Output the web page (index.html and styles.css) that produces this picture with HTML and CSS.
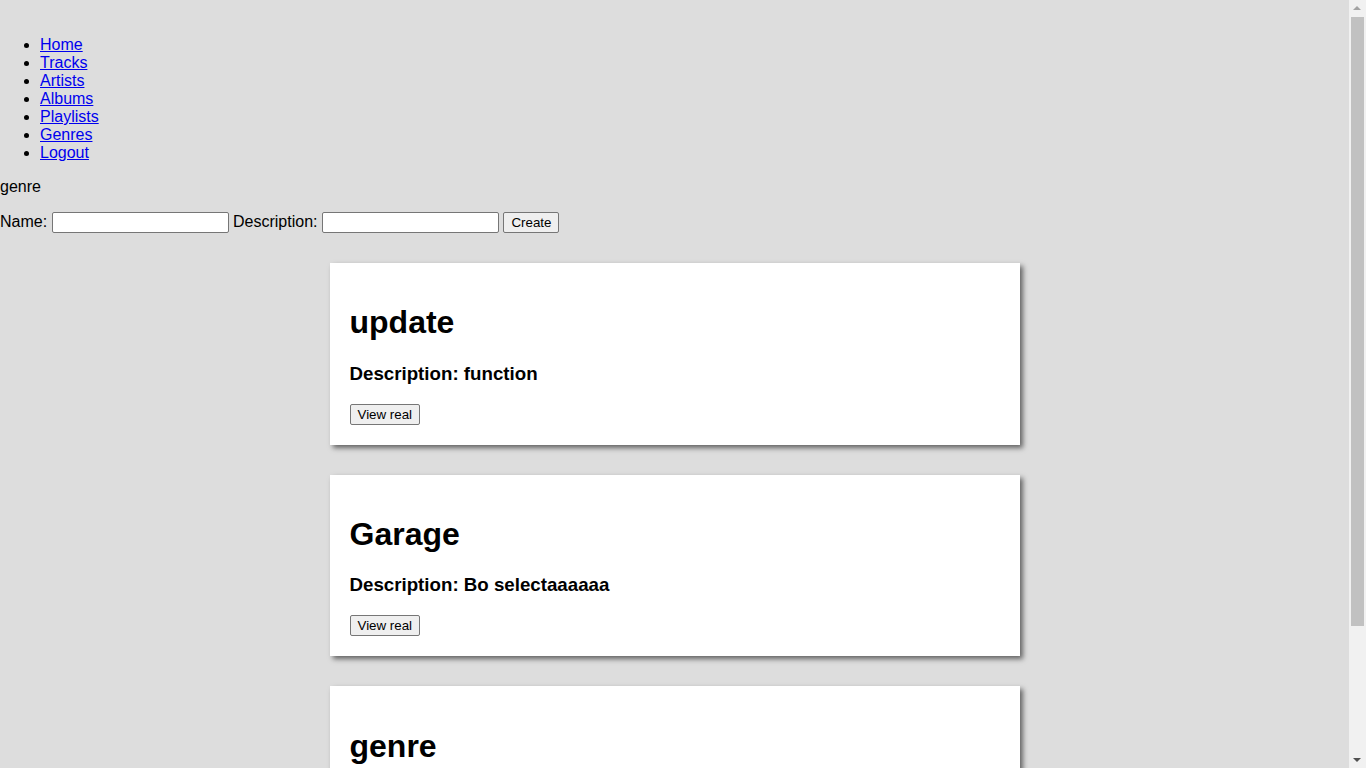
FILE: index.html
```html
<!DOCTYPE html>
<html>
<head>
<meta charset="utf-8">
<title>Genres</title>
<link rel="stylesheet" href="styles.css">
</head>
<body>
<nav class="nav">
  <ul class="nav-list">
    <li><a href="#">Home</a></li>
    <li><a href="#">Tracks</a></li>
    <li><a href="#">Artists</a></li>
    <li><a href="#">Albums</a></li>
    <li><a href="#">Playlists</a></li>
    <li><a href="#">Genres</a></li>
    <li><a href="#">Logout</a></li>
  </ul>
</nav>
<p class="page-title">genre</p>
<form class="create-form">
  <label>Name: <input class="text-input" type="text"></label>
  <label>Description: <input class="text-input" type="text"></label>
  <button class="btn" type="button">Create</button>
</form>
<main class="cards">
  <section class="card">
    <h1 class="card-title">update</h1>
    <h3 class="card-desc">Description: function</h3>
    <button class="btn card-btn" type="button">View real</button>
  </section>
  <section class="card">
    <h1 class="card-title">Garage</h1>
    <h3 class="card-desc">Description: Bo selectaaaaaa</h3>
    <button class="btn card-btn" type="button">View real</button>
  </section>
  <section class="card">
    <h1 class="card-title">genre</h1>
    <h3 class="card-desc">Description: genre</h3>
    <button class="btn card-btn" type="button">View real</button>
  </section>
</main>
<div class="fake-scrollbar" aria-hidden="true">
  <span class="sb-arrow sb-up"></span>
  <span class="sb-thumb"></span>
  <span class="sb-arrow sb-down"></span>
</div>
</body>
</html>
```
FILE: styles.css
```css
html, body {
  margin: 0;
  padding: 0;
}
body {
  margin-right: 17px;
  background: #dddddd;
  font-family: "Liberation Sans", Arial, sans-serif;
  font-size: 16px;
  line-height: normal;
  color: #000;
}
html {
  background: #dddddd;
}
.nav {
  padding-top: 20px;
}
.nav-list {
  margin: 16px 0;
  padding-left: 40px;
}
.nav-list a {
  color: #0000ee;
}
.page-title {
  margin: 16px 0;
}
.create-form {
  margin: 0;
}
.text-input {
  width: 177px;
  height: 21px;
  box-sizing: border-box;
  font-family: "Liberation Sans", Arial, sans-serif;
  font-size: 13.33px;
  border: 1px solid #767676;
  border-radius: 2px;
  padding: 1px 2px;
  background: #fff;
  vertical-align: baseline;
}
.btn {
  font-family: "Liberation Sans", Arial, sans-serif;
  font-size: 13.33px;
  height: 21px;
  padding: 1px 7px;
  border: 1px solid #767676;
  border-radius: 2px;
  background: #efefef;
  color: #000;
}
.card-btn {
  padding: 1px 7px;
}
.cards {
  display: flex;
  flex-direction: column;
  align-items: center;
  gap: 30px;
  padding: 30px 0 40px;
}
.card {
  width: 650px;
  padding: 20px;
  background: #fff;
  box-shadow: 3px 3px 5px rgba(0, 0, 0, 0.55);
}
.card-title {
  font-size: 32px;
  margin: 21.44px 0;
}
.card-desc {
  font-size: 18.72px;
  margin: 18.72px 0;
}

/* simulated browser scrollbar, overlaid at the right edge */
.fake-scrollbar {
  position: fixed;
  top: 0;
  right: 0;
  width: 17px;
  height: 100vh;
  background: #f1f1f1;
}
.sb-thumb {
  position: absolute;
  left: 2px;
  right: 2px;
  top: 17px;
  height: 609px;
  background: #c1c1c1;
}
.sb-arrow {
  position: absolute;
  left: 4px;
  width: 0;
  height: 0;
  border-left: 4px solid transparent;
  border-right: 4px solid transparent;
}
.sb-up {
  top: 6px;
  border-bottom: 4px solid #a3a3a3;
}
.sb-down {
  bottom: 6px;
  border-top: 4px solid #505050;
}
```
